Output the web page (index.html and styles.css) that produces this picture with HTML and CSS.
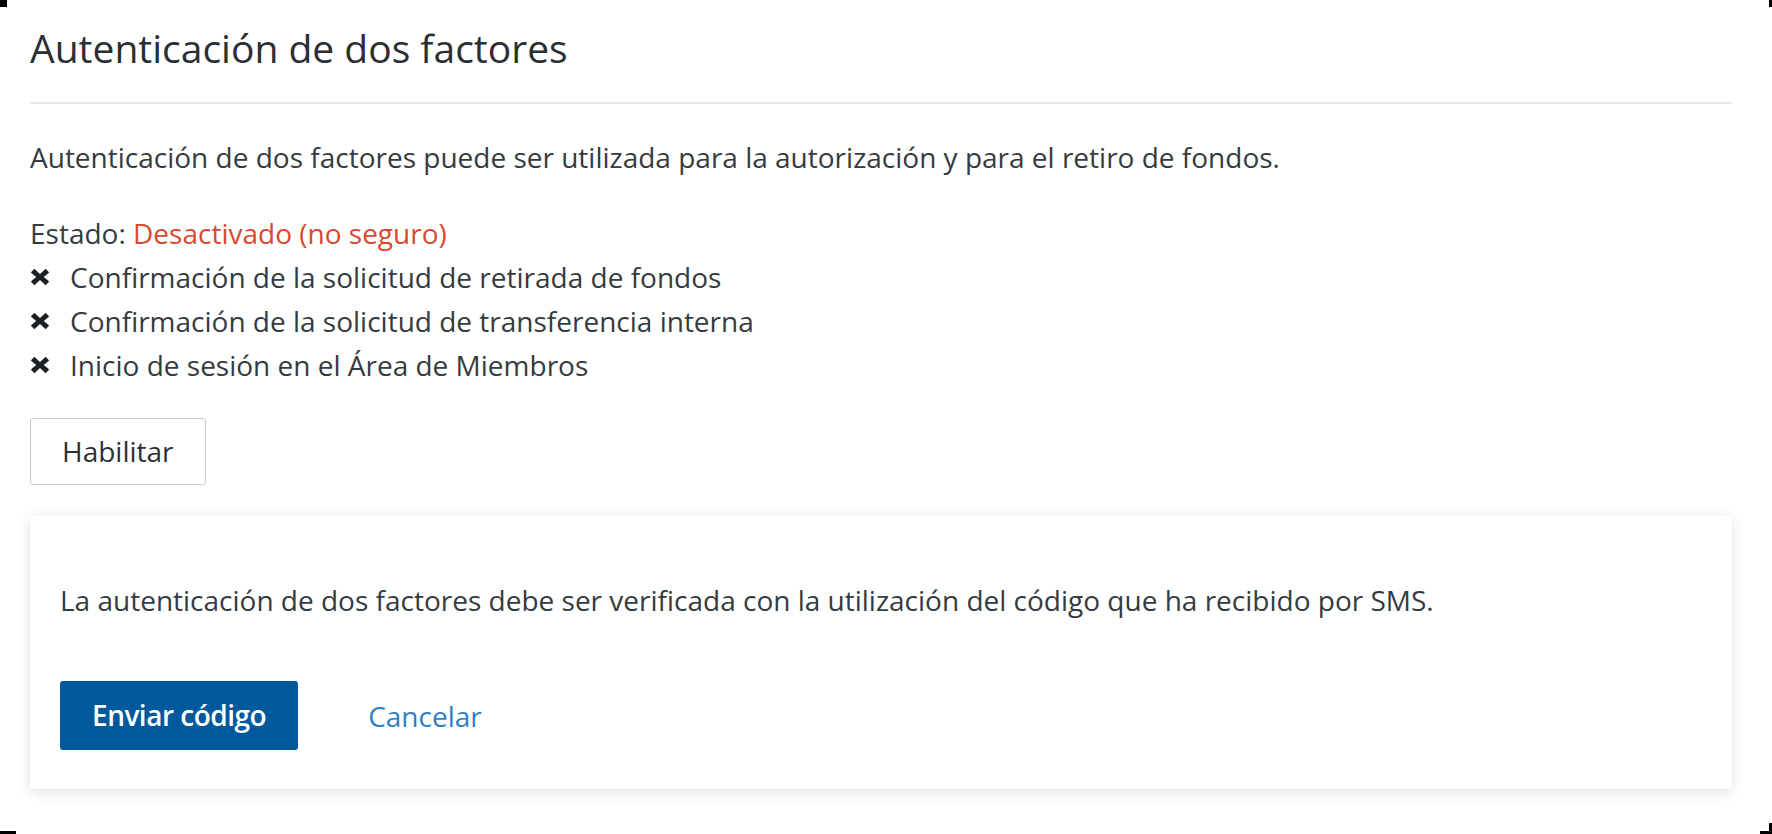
FILE: index.html
```html
<!DOCTYPE html>
<html lang="es">
<head>
<meta charset="utf-8">
<title>Autenticación de dos factores</title>
<link rel="stylesheet" href="styles.css">
</head>
<body>
<span class="corner corner-tl"></span>
<span class="corner corner-tr"></span>
<span class="corner corner-bl"></span>
<span class="corner corner-br"></span>
<main class="page">
  <header class="page-header">
    <h1 class="title">Autenticación de dos factores</h1>
  </header>
  <p class="intro">Autenticación de dos factores puede ser utilizada para la autorización y para el retiro de fondos.</p>
  <div class="status">
    <div class="status-line">Estado: <span class="status-off">Desactivado (no seguro)</span></div>
    <ul class="features">
      <li class="feature"><svg class="x-icon" viewBox="0 0 20 18" aria-hidden="true"><path d="M0.8 4.4 4.4 0.8 10 6.1 15.6 0.8 19.2 4.4 13.8 9 19.2 13.6 15.6 17.2 10 11.9 4.4 17.2 0.8 13.6 6.2 9Z"/></svg><span>Confirmación de la solicitud de retirada de fondos</span></li>
      <li class="feature"><svg class="x-icon" viewBox="0 0 20 18" aria-hidden="true"><path d="M0.8 4.4 4.4 0.8 10 6.1 15.6 0.8 19.2 4.4 13.8 9 19.2 13.6 15.6 17.2 10 11.9 4.4 17.2 0.8 13.6 6.2 9Z"/></svg><span>Confirmación de la solicitud de transferencia interna</span></li>
      <li class="feature"><svg class="x-icon" viewBox="0 0 20 18" aria-hidden="true"><path d="M0.8 4.4 4.4 0.8 10 6.1 15.6 0.8 19.2 4.4 13.8 9 19.2 13.6 15.6 17.2 10 11.9 4.4 17.2 0.8 13.6 6.2 9Z"/></svg><span>Inicio de sesión en el Área de Miembros</span></li>
    </ul>
  </div>
  <div class="actions">
    <button class="btn btn-outline" type="button">Habilitar</button>
  </div>
  <section class="card">
    <p class="card-text">La autenticación de dos factores debe ser verificada con la utilización del código que ha recibido por SMS.</p>
    <div class="card-actions">
      <button class="btn btn-primary" type="button">Enviar código</button>
      <a class="link" href="#">Cancelar</a>
    </div>
  </section>
</main>
</body>
</html>
```

FILE: styles.css
```css
* {
  box-sizing: border-box;
}

html, body {
  margin: 0;
  padding: 0;
  background: #ffffff;
}

body {
  font-family: "Open Sans", "Liberation Sans", sans-serif;
  color: #353b40;
  font-size: 28px;
  line-height: 44px;
  position: relative;
  min-height: 834px;
}

.page {
  padding: 23px 40px 0 30px;
}

.page-header {
  padding-bottom: 29px;
  border-bottom: 2px solid #e4eaec;
}

.title {
  margin: 0;
  font-size: 39px;
  line-height: 50px;
  font-weight: 400;
  color: #2a2f34;
}

.intro {
  margin: 31px 0 0;
}

.status {
  margin-top: 32px;
}

.status-off {
  color: #d84a2e;
}

.features {
  list-style: none;
  margin: 0;
  padding: 0;
}

.feature {
  display: flex;
  align-items: center;
}

.x-icon {
  width: 20px;
  height: 18px;
  fill: #1c2023;
  margin-right: 20px;
  flex: none;
}

.actions {
  margin-top: 31px;
}

.btn {
  font-family: inherit;
  font-size: 28px;
  line-height: 39px;
  border-radius: 3px;
  cursor: pointer;
}

.btn-outline {
  background: #ffffff;
  color: #2c3136;
  border: 1px solid #c3cbcf;
  padding: 13px 31px;
}

.card {
  margin-top: 31px;
  background: #ffffff;
  border-radius: 4px;
  box-shadow: 0 3px 14px rgba(0, 0, 0, 0.13);
  padding: 62px 30px 39px;
}

.card-text {
  margin: 0 0 59px;
}

.card-actions {
  display: flex;
  align-items: center;
  gap: 70px;
}

.btn-primary {
  background: #00599a;
  color: #ffffff;
  border: none;
  font-weight: 600;
  letter-spacing: -0.5px;
  padding: 15px 32px;
}

.link {
  color: #2f7fc4;
  text-decoration: none;
}

.corner {
  position: absolute;
  background: #000;
}

.corner-tl {
  top: 0;
  left: 0;
  width: 7px;
  height: 7px;
}

.corner-tr {
  top: 0;
  right: 0;
  width: 3px;
  height: 7px;
}

.corner-bl {
  bottom: 0;
  left: 0;
  width: 16px;
  height: 3px;
}

.corner-br {
  bottom: 0;
  right: 0;
  width: 12px;
  height: 11px;
  background: transparent;
  border-right: 3px solid #000;
  border-bottom: 3px solid #000;
}
```
